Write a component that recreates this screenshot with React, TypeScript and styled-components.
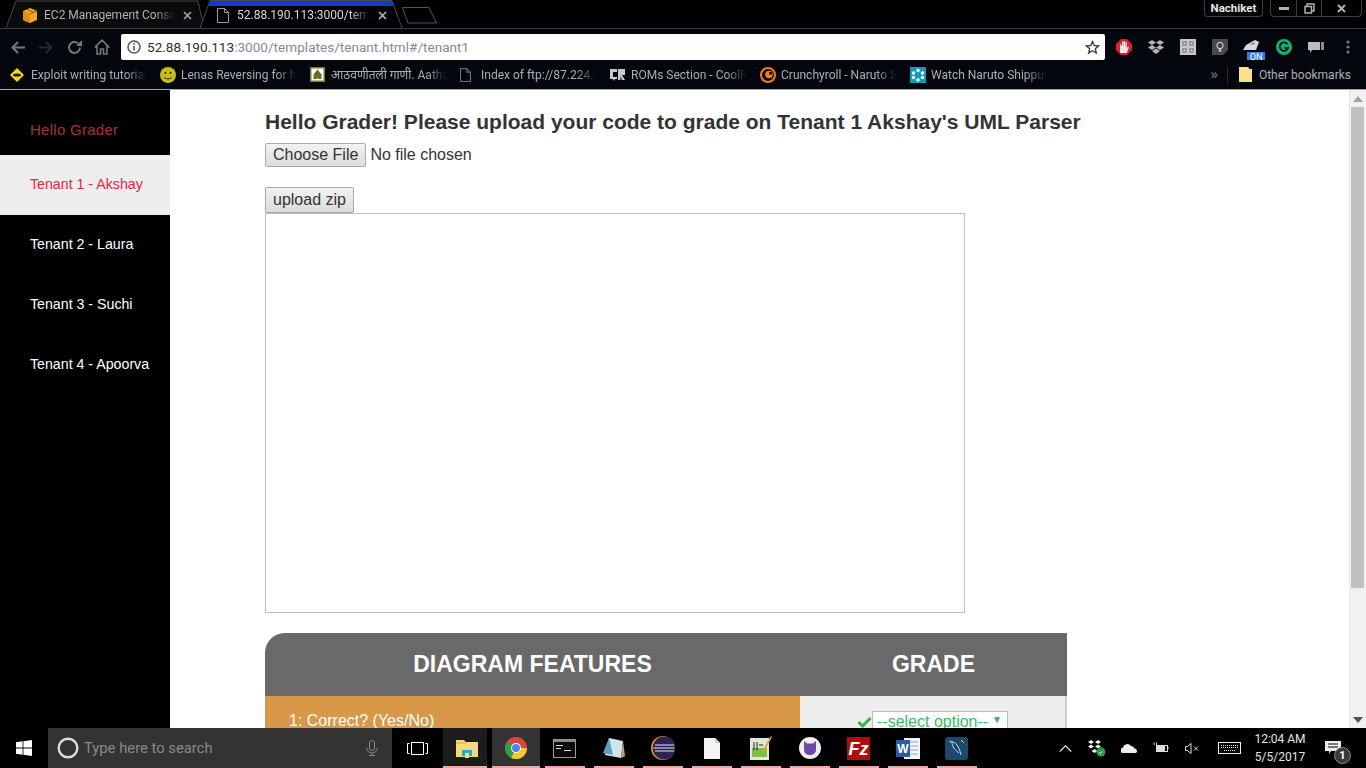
import React from 'react';
import styled, { createGlobalStyle } from 'styled-components';

const Global = createGlobalStyle`
  html, body { margin: 0; padding: 0; height: 100%; overflow: hidden; background: #000; }
  * { box-sizing: border-box; }
`;
const UI = `Roboto, "Noto Sans", "Noto Sans Devanagari", "DejaVu Sans", sans-serif`;
const WEB = `"Liberation Sans", Arial, sans-serif`;

const Screen = styled.div`
  width: 1366px; height: 768px; display: flex; flex-direction: column; overflow: hidden; position: relative; font-family: ${WEB};
`;
/* ---------- browser chrome ---------- */
const TabStrip = styled.div`
  height: 29px; background: #000; border-bottom: 1px solid #3c3c3c; display: flex; align-items: flex-start; padding-left: 6px; flex: none;
`;
const Tab = styled.div<{ $w: number; $pad: number }>`
  position: relative; width: ${p => p.$w}px; height: 28px; display: flex; align-items: center; padding: 2px 0 0 ${p => p.$pad}px;
  font: 12px ${UI}; flex: none;
  margin-right: -4px;
`;
const TabOutline = styled.svg`
  position: absolute; inset: 0; width: 100%; height: 100%;
`;
const TabTitle = styled.span<{ $w: number; $active?: boolean }>`
  position: relative; width: ${p => p.$w}px; margin-left: ${p => (p.$active ? 8 : 7)}px; white-space: nowrap; overflow: hidden;
  color: ${p => (p.$active ? '#d6d9dc' : '#aeb3b8')};
  -webkit-mask-image: linear-gradient(90deg, #000 85%, transparent);
  mask-image: linear-gradient(90deg, #000 85%, transparent);
`;
const TabClose = styled.svg`
  position: relative; margin-left: 8px; flex: none;
`;
const TabIcon = styled.svg`
  position: relative; flex: none;
`;
const NewTab = styled.svg`
  margin: 7px 0 0 4px; flex: none;
`;
const Spacer = styled.div`
  flex: 1;
`;
const EndGap = styled.div`
  flex: 0 0 15px;
`;
const CaptionGroup = styled.div<{ $w: number; $mr: number }>`
  width: ${p => p.$w}px; height: 17px; margin-right: ${p => p.$mr}px; border: 1px solid #3f3f3f; border-top: 0; border-radius: 0 0 4px 4px;
  display: flex; align-items: center; justify-content: center; font: bold 11.5px ${UI}; color: #e8e8e8; flex: none;
`;
const CaptionCell = styled.div<{ $w: number; $line?: boolean }>`
  width: ${p => p.$w}px; height: 100%; display: flex; align-items: center; justify-content: center;
  border-left: ${p => (p.$line ? '1px solid #3f3f3f' : '0')};
  flex: none;
`;
const Toolbar = styled.div`
  height: 31px; background: #04060d; display: flex; align-items: center; flex: none; padding-top: 5px;
`;
const NavBtn = styled.div`
  width: 28px; height: 26px; display: flex; align-items: center; justify-content: center; flex: none;
`;
const NavGroup = styled.div`
  display: flex; padding-left: 4px; width: 121px; flex: none;
`;
const Omnibox = styled.div`
  width: 984px; height: 26px; background: #fff; border-radius: 2px; display: flex; align-items: center; padding: 0 5px 0 6px; flex: none;
  font: 13.6px ${UI};
`;
const UrlHost = styled.span`
  color: #333;
`;
const UrlRest = styled.span`
  color: #8a8a8a;
`;
const Url = styled.div`
  margin-left: 6px; flex: 1; white-space: nowrap;
`;
const Extensions = styled.div`
  display: flex; padding-left: 3px;
`;
const ExtBtn = styled.div`
  width: 32px; height: 26px; display: flex; align-items: center; justify-content: center; flex: none;
`;
const Bookmarks = styled.div`
  height: 30px; background: #04060d; border-bottom: 1px solid #a5a5a5; display: flex; align-items: center; padding-left: 10px; flex: none;
  font: 12px ${UI}; color: #aab0b6;
`;
const Bookmark = styled.div`
  width: 150px; display: flex; align-items: center; flex: none;
`;
const BookmarkIcon = styled.div`
  width: 21px; display: flex; align-items: center; flex: none;
`;
const BookmarkText = styled.span`
  width: 116px; white-space: nowrap; overflow: hidden;
  -webkit-mask-image: linear-gradient(90deg, #000 82%, transparent);
  mask-image: linear-gradient(90deg, #000 82%, transparent);
`;
const Chevrons = styled.div`
  width: 14px; text-align: right; font-size: 15px; line-height: 15px; color: #6d6d6d; font-weight: bold;
`;
const Sep = styled.div`
  width: 1px; height: 16px; background: #2a2c30; margin: 0 11px 0 9px;
`;
const OtherText = styled.span`
  margin-left: 7px; white-space: nowrap;
`;
/* ---------- page ---------- */
const Main = styled.div`
  height: 638px; display: flex; background: #fff; overflow: hidden; flex: none;
`;
const Sidebar = styled.nav`
  width: 170px; background: #000; flex: none;
`;
const Greeting = styled.div`
  height: 65px; padding: 31px 0 0 30px; font-size: 15px; letter-spacing: .27px; line-height: 18px; color: #a83232;
`;
const NavItem = styled.div<{ $active?: boolean }>`
  height: 60px; display: flex; align-items: center; padding: 0 0 2px 30px; font-size: 14.2px;
  background: ${p => (p.$active ? '#eeeeee' : '#000')};
  color: ${p => (p.$active ? '#e8233f' : '#fff')};
`;
const Content = styled.main`
  flex: 1; padding: 20px 0 0 95px; color: #333;
`;
const Title = styled.h3`
  margin: 0 0 10px; font-size: 21px; line-height: 23px; font-weight: bold; color: #333; white-space: nowrap;
`;
const FileRow = styled.div`
  display: flex; align-items: center; height: 24px; font-size: 16px; margin-bottom: 20px;
`;
const FileNote = styled.span`
  margin-left: 4px; color: #333;
`;
const Btn = styled.button`
  font: 16px ${WEB}; color: #333; padding: 0 7px; height: 100%; border: 1px solid #a9a9a9; border-radius: 2px;
  background: linear-gradient(#f2f2f2, #dcdcdc); display: block;
`;
const UploadRow = styled.div`
  height: 26px; display: flex;
`;
const Preview = styled.div`
  width: 700px; height: 400px; border: 1px solid #bdbdbd; background: #fff;
`;
const Table = styled.div`
  width: 802px; margin-top: 20px;
`;
const THead = styled.div`
  height: 63px; background: #696969; border-top-left-radius: 20px; display: grid; grid-template-columns: 535px 267px; color: #fff;
`;
const Th = styled.div`
  display: flex; align-items: center; justify-content: center; padding-bottom: 1px; font-size: 23px; font-weight: bold;
`;
const TRow = styled.div`
  display: grid; grid-template-columns: 535px 267px; height: 60px;
`;
const FeatureCell = styled.div`
  background: #d99748; color: #fff; font-size: 16px; padding: 16px 0 0 24px; line-height: 18px;
`;
const GradeCell = styled.div`
  background: #eeeeee; border-right: 2px solid #d0d0d0; padding: 15px 0 0 57px; display: flex; align-items: flex-start; position: relative;
`;
const GreenCheck = styled.svg`
  margin-top: 5px; flex: none;
`;
const GreenSelect = styled.div`
  width: 136px; height: 24px; border: 1px solid #bbb; background: #fff; color: #34c060; font-size: 16px; padding: 0 5px 0 4px; line-height: 20px;
  display: flex; justify-content: space-between; white-space: nowrap;
`;
const Caret = styled.span`
  font-size: 10px; line-height: 16px; color: #2db84d;
`;
const Scrollbar = styled.div`
  width: 17px; background: #f1f1f1; border-left: 1px solid #e6e6e6; display: flex; flex-direction: column; align-items: center; padding-right: 1px; flex: none;
`;
const ScrollArrow = styled.div`
  height: 17px; flex: none; display: flex; align-items: center; justify-content: center;
`;
const ScrollThumb = styled.div`
  width: 13px; height: 481px; background: #c1c1c1; flex: none;
`;
/* ---------- taskbar ---------- */
const Taskbar = styled.footer`
  height: 40px; background: #000; display: flex; align-items: stretch; flex: none; color: #fff;
`;
const Start = styled.div`
  width: 48px; display: flex; align-items: center; justify-content: center; flex: none;
`;
const Search = styled.div`
  width: 344px; background: #333; display: flex; align-items: center; padding-left: 9px; font: 14.8px ${UI}; color: #8a8a8a; flex: none;
`;
const SearchText = styled.span`
  margin-left: 5px; flex: 1;
`;
const Mic = styled.svg`
  margin-right: 14px;
`;
const TaskView = styled.div`
  width: 50px; display: flex; align-items: center; justify-content: center; flex: none;
`;
const TaskApp = styled.div<{ $bg?: string; $l?: number; $r?: number }>`
  width: 49px; display: flex; align-items: center; justify-content: center; flex: none; position: relative;
  &::before {
    content: ''; position: absolute; top: 0; bottom: 0; left: ${p => p.$l ?? 5}px; right: ${p => p.$r ?? 4}px;
    background: ${p => p.$bg ?? 'transparent'};
  }
  &::after {
    content: ''; position: absolute; left: ${p => p.$l ?? 5}px; right: ${p => p.$r ?? 4}px; bottom: 0; height: 2px;
    background: #f2a79c;
  }
  svg { position: relative; }
`;
const Tray = styled.div`
  margin-left: auto; display: flex; align-items: center; padding-right: 10px;
`;
const TrayIcon = styled.div<{ $w: number }>`
  width: ${p => p.$w}px; height: 40px; display: flex; align-items: center; justify-content: center; flex: none;
`;
const Clock = styled.div`
  width: 60px; text-align: center; font: 12px/18px ${UI}; color: #e6e6e6; flex: none; white-space: nowrap;
`;
const Notify = styled.div`
  width: 46px; height: 40px; display: flex; align-items: center; justify-content: center; position: relative; flex: none;
`;
const NotifyBadge = styled.span`
  position: absolute; left: 24px; top: 19px; width: 17px; height: 17px; border-radius: 50%; background: #3a3a3a; border: 1px solid #888;
  font: bold 11px/15px ${UI}; text-align: center; color: #fff;
`;

/* ---------- drawings ---------- */
const CloseX = ({ c = '#a0a0a0' }: { c?: string }) => (
  <TabClose width="9" height="9" viewBox="0 0 9 9"><path d="M1 1l7 7M8 1L1 8" stroke={c} strokeWidth="1.7" /></TabClose>
);
const PageIcon = ({ c = '#9a9a9a', w = 12, h = 15 }: { c?: string; w?: number; h?: number }) => (
  <TabIcon width={w} height={h} viewBox="0 0 12 15" fill="none"><path d="M.5.5h7l4 4v10H.5zM7.5.5v4h4" stroke={c} /></TabIcon>
);
const AwsBox = () => (
  <TabIcon width="14" height="15" viewBox="0 0 14 15">
    <path d="M7 0l7 3v9l-7 3-7-3V3z" fill="#f5a623" /><path d="M7 6v9l-7-3V3z" fill="#e08e12" /><path d="M4 1.500l7 3M7 6l7-3" stroke="#7a4d06" strokeWidth=".8" fill="none" />
  </TabIcon>
);

const marks: { icon: React.ReactNode; text: string }[] = [
  { icon: <svg width="14" height="14" viewBox="0 0 14 14"><path d="M7 0l7 7-7 7-7-7z" fill="#f7d417" /><ellipse cx="7" cy="7" rx="4" ry="1.600" fill="#111" /></svg>, text: 'Exploit writing tutorial part' },
  { icon: <svg width="16" height="16" viewBox="0 0 16 16"><circle cx="8" cy="8" r="8" fill="#c9bd17" /><circle cx="5.500" cy="6" r="1" fill="#222" /><circle cx="10.500" cy="6" r="1" fill="#222" /><path d="M4 10c1.500 2.500 6.500 2.500 8 0" stroke="#222" fill="none" /></svg>, text: 'Lenas Reversing for Newbies' },
  { icon: <svg width="15" height="15" viewBox="0 0 15 15"><rect width="15" height="15" fill="#7d7a2a" /><rect x="1.500" y="1.500" width="12" height="12" fill="#fff" /><path d="M7.500 2.500l4 5v4.500h-3l-1-1-1 1h-3V7.500z" fill="#6a6a20" /></svg>, text: 'आठवणीतली गाणी. Aathavanitli' },
  { icon: <PageIcon c="#8a8a8a" w={11} h={14} />, text: 'Index of ftp://87.224.217.1' },
  { icon: <svg width="15" height="14" viewBox="0 0 15 14"><path d="M0 1h7v3H3v5h4v2H5l-1 2-1-2H0zM8 1h7v6h-3l3 5h-3l-1.500-4V12H8z" fill="#c6ccd2" /></svg>, text: 'ROMs Section - CoolROM.com' },
  { icon: <svg width="16" height="16" viewBox="0 0 16 16" fill="none"><circle cx="8" cy="8" r="7" stroke="#f47f1e" strokeWidth="2" /><circle cx="9" cy="7.500" r="3.800" fill="#f47f1e" /><circle cx="10.500" cy="6.200" r="1.500" fill="#04060d" /></svg>, text: 'Crunchyroll - Naruto Shippuden' },
  { icon: <svg width="16" height="16" viewBox="0 0 16 16" fill="#fff"><rect width="16" height="16" fill="#0f9bc0" /><circle cx="8" cy="3.500" r="1.700" /><circle cx="3.500" cy="6" r="1.700" /><circle cx="12.500" cy="6" r="1.700" /><circle cx="3.500" cy="10.500" r="1.700" /><circle cx="12.500" cy="10.500" r="1.700" /><circle cx="8" cy="13" r="1.700" /></svg>, text: 'Watch Naruto Shippuden' },
];

export default function App() {
  return (
    <Screen>
      <Global />
      <TabStrip>
        <Tab $w={198} $pad={17}>
          <TabOutline viewBox="0 0 198 28" preserveAspectRatio="none"><path d="M0 28L10 1H192L198 28" fill="#0b0b0c" stroke="#4a4a4a" /></TabOutline>
          <AwsBox />
          <TabTitle $w={131}>EC2 Management Console</TabTitle>
          <CloseX />
        </Tab>
        <Tab $w={202} $pad={17}>
          <TabOutline viewBox="0 0 202 28" preserveAspectRatio="none">
            <path d="M0 28L10 .5H192L202 28" fill="#000" stroke="#4a4a4a" />
            <path d="M10 1H192L194 6H8z" fill="#0a3cd2" />
          </TabOutline>
          <PageIcon />
          <TabTitle $w={133} $active>52.88.190.113:3000/templates</TabTitle>
          <CloseX c="#b5b5b5" />
        </Tab>
        <NewTab width="35" height="17" viewBox="0 0 35 17" fill="none"><path d="M.5.5H27L34.500 16H6z" stroke="#555" /></NewTab>
        <Spacer />
        <CaptionGroup $w={59} $mr={7}>Nachiket</CaptionGroup>
        <CaptionGroup $w={92} $mr={4}>
          <CaptionCell $w={25}><svg width="10" height="3"><rect width="10" height="3" fill="#b0b0b0" /></svg></CaptionCell>
          <CaptionCell $w={25} $line><svg width="11" height="11" viewBox="0 0 11 11" fill="none" stroke="#b0b0b0" strokeWidth="1.500"><path d="M3 3V1h7v7H8M1 3.500h6.500V10H1z" /></svg></CaptionCell>
          <CaptionCell $w={40} $line><svg width="9" height="9" viewBox="0 0 9 9"><path d="M1 1l7 7M8 1L1 8" stroke="#b0b0b0" strokeWidth="2" /></svg></CaptionCell>
        </CaptionGroup>
      </TabStrip>

      <Toolbar>
        <NavGroup>
          <NavBtn><svg width="14" height="13" viewBox="0 0 14 13" fill="none"><path d="M14 6.500H2M7 1L1.500 6.500 7 12" stroke="#77797d" strokeWidth="2" /></svg></NavBtn>
          <NavBtn><svg width="14" height="13" viewBox="0 0 14 13" fill="none"><path d="M0 6.500h12M7 1l5.500 5.500L7 12" stroke="#26282c" strokeWidth="2" /></svg></NavBtn>
          <NavBtn><svg width="15" height="15" viewBox="0 0 15 15" fill="none"><path d="M13 7.500A5.500 5.500 0 1 1 11 3.200" stroke="#77797d" strokeWidth="2" /><path d="M9 6h6V0z" fill="#77797d" /></svg></NavBtn>
          <NavBtn><svg width="16" height="16" viewBox="0 0 16 16" fill="none"><path d="M.7 8.500L8 1.200l7.300 7.300M3 6.500V15h3.500V10h3v5H13V6.500" stroke="#77797d" strokeWidth="1.600" /></svg></NavBtn>
        </NavGroup>
        <Omnibox>
          <svg width="14" height="14" viewBox="0 0 14 14" fill="none"><circle cx="7" cy="7" r="6" stroke="#555" strokeWidth="1.500" /><path d="M7 6v4.500M7 3.200v1.600" stroke="#555" strokeWidth="1.600" /></svg>
          <Url><UrlHost>52.88.190.113</UrlHost><UrlRest>:3000/templates/tenant.html#/tenant1</UrlRest></Url>
          <svg width="15" height="15" viewBox="0 0 15 15" fill="none"><path d="M7.500 1.500l1.800 4 4.300.4-3.300 2.800 1 4.300-3.800-2.300-3.800 2.300 1-4.300L1.400 5.900l4.300-.4z" stroke="#444" strokeWidth="1.400" /></svg>
        </Omnibox>
        <Extensions>
          <ExtBtn><svg width="16" height="16" viewBox="0 0 16 16"><path d="M5 0h6l5 5v6l-5 5H5l-5-5V5z" fill="#d8232a" /><path d="M4 14V5.500h1.500V7H6V2.500h1.300V7h.4V2h1.300v5h.4V3h1.300v6l1.300-1.500.9.700L10.800 14z" fill="#f3e6e6" /></svg></ExtBtn>
          <ExtBtn><svg width="16" height="15" viewBox="0 0 16 15" fill="#b5b5b5"><path d="M4 0l4 2.500L4 5 0 2.500zM12 0l4 2.500L12 5 8 2.500zM4 5l4 2.500L4 10 0 7.500zM12 5l4 2.500L12 10 8 7.500zM4 11l4-2.500 4 2.500-4 3z" /></svg></ExtBtn>
          <ExtBtn><svg width="16" height="16" viewBox="0 0 16 16"><rect width="16" height="16" fill="#c9c9c9" /><path d="M2 2h5v5H2zM9 2h5v5H9zM2 9h5v5H2zM9 9h5v5H9z" fill="#9a9a9a" /><path d="M4 4h1v1H4zM11 4h1v1h-1zM4 11h1v1H4zM11 11h1v1h-1z" fill="#eee" /></svg></ExtBtn>
          <ExtBtn><svg width="16" height="16" viewBox="0 0 16 16" fill="none"><path d="M0 0h16v11l-5 5H0z" fill="#4a4a4a" /><circle cx="8" cy="6.500" r="3.200" stroke="#e4e4e4" /><path d="M6.800 10.500h2.400v2H6.800z" fill="#e4e4e4" /></svg></ExtBtn>
          <ExtBtn>
            <svg width="28" height="28" viewBox="0 0 28 28"><path d="M8 12l9-5 4 2-3 8H5z" fill="#d8d8d8" /><path d="M12 12l4-3 1 2z" fill="#777" /><rect x="9" y="19" width="18" height="9" fill="#3b7de0" /><text x="18" y="27" textAnchor="middle" fontSize="9" fontFamily="Roboto" fill="#fff">ON</text></svg>
          </ExtBtn>
          <ExtBtn><svg width="16" height="16" viewBox="0 0 16 16" fill="none"><circle cx="8" cy="8" r="8" fill="#15b06f" /><path d="M11.500 5.200A4.200 4.200 0 1 0 12 9H8.500" stroke="#0b0d12" strokeWidth="1.800" /></svg></ExtBtn>
          <ExtBtn><svg width="16" height="14" viewBox="0 0 16 14"><path d="M0 2h12v8H4l-2 3v-3H0z" fill="#bdbdbd" /><path d="M13 2h3v8h-3z" fill="#8a8a8a" /></svg></ExtBtn>
          <ExtBtn><svg width="4" height="14" viewBox="0 0 4 14" fill="#777"><circle cx="2" cy="2" r="1.600" /><circle cx="2" cy="7" r="1.600" /><circle cx="2" cy="12" r="1.600" /></svg></ExtBtn>
        </Extensions>
      </Toolbar>

      <Bookmarks>
        {marks.map(m => (
          <Bookmark key={m.text}><BookmarkIcon>{m.icon}</BookmarkIcon><BookmarkText>{m.text}</BookmarkText></Bookmark>
        ))}
        <Spacer />
        <Chevrons>»</Chevrons>
        <Sep />
        <svg width="13" height="15" viewBox="0 0 13 15"><path d="M0 0h9l1 1v1h3v13H0z" fill="#fbe08a" /></svg>
        <OtherText>Other bookmarks</OtherText>
        <EndGap />
      </Bookmarks>

      <Main>
        <Sidebar>
          <Greeting>Hello Grader</Greeting>
          <NavItem $active>Tenant 1 - Akshay</NavItem>
          <NavItem>Tenant 2 - Laura</NavItem>
          <NavItem>Tenant 3 - Suchi</NavItem>
          <NavItem>Tenant 4 - Apoorva</NavItem>
        </Sidebar>
        <Content>
          <Title>Hello Grader! Please upload your code to grade on Tenant 1 Akshay's UML Parser</Title>
          <FileRow><Btn>Choose File</Btn><FileNote>No file chosen</FileNote></FileRow>
          <UploadRow><Btn>upload zip</Btn></UploadRow>
          <Preview />
          <Table>
            <THead><Th>DIAGRAM FEATURES</Th><Th>GRADE</Th></THead>
            <TRow>
              <FeatureCell>1: Correct? (Yes/No)</FeatureCell>
              <GradeCell>
                <GreenCheck width="15" height="12" viewBox="0 0 15 12"><path d="M1.500 6l4 4 8-8" stroke="#2db84d" strokeWidth="3" fill="none" /></GreenCheck>
                <GreenSelect>--select option--<Caret>▼</Caret></GreenSelect>
              </GradeCell>
            </TRow>
          </Table>
        </Content>
        <Scrollbar>
          <ScrollArrow><svg width="10" height="6"><path d="M0 6L5 0l5 6z" fill="#a3a3a3" /></svg></ScrollArrow>
          <ScrollThumb />
          <Spacer />
          <ScrollArrow><svg width="10" height="6"><path d="M0 0l5 6 5-6z" fill="#505050" /></svg></ScrollArrow>
        </Scrollbar>
      </Main>

      <Taskbar>
        <Start><svg width="16" height="16" viewBox="0 0 16 16" fill="#fff"><path d="M0 2.200l6.600-.9v6.300H0zM7.400 1.200L16 0v7.600H7.400zM0 8.400h6.600v6.300L0 13.800zM7.400 8.400H16V16l-8.600-1.200z" /></svg></Start>
        <Search>
          <svg width="22" height="22" viewBox="0 0 22 22" fill="none"><circle cx="11" cy="11" r="9.300" stroke="#dcdcdc" strokeWidth="2.400" /></svg>
          <SearchText>Type here to search</SearchText>
          <Mic width="12" height="16" viewBox="0 0 12 16" fill="none" stroke="#888"><rect x="3.500" y=".5" width="5" height="10" rx="2.500" /><path d="M.5 7.500a5.500 5.500 0 0 0 11 0M6 13v2.500M3 15.500h6" /></Mic>
        </Search>
        <TaskView><svg width="21" height="13" viewBox="0 0 21 13" fill="none" stroke="#fff"><rect x="4.500" y=".5" width="12" height="12" /><path d="M2.500 1.500H.5v10h2M18.500 1.500h2v10h-2" /></svg></TaskView>
        <TaskApp $bg="#1c1c1c" $l={1} $r={4}>
          <svg width="22" height="19" viewBox="0 0 22 19"><path d="M0 1h8l2 2h12v15H0z" fill="#f6d97c" /><path d="M0 3h10v2H0z" fill="#e9c050" /><path d="M6 11h10v6H6z" fill="#2aa5dc" /><path d="M9 14h4v5H9z" fill="#f6d97c" /></svg>
        </TaskApp>
        <TaskApp $bg="#333" $l={1} $r={0}>
          <svg width="22" height="22" viewBox="0 0 22 22"><circle cx="11" cy="11" r="11" fill="#e0433a" /><path d="M11 11L22 11A11 11 0 0 1 6 20.800z" fill="#f8c924" /><path d="M11 11L6 20.800A11 11 0 0 1 2 4.800z" fill="#2f9f48" /><circle cx="11" cy="11" r="5" fill="#fff" /><circle cx="11" cy="11" r="4" fill="#4a84e8" /></svg>
        </TaskApp>
        <TaskApp><svg width="23" height="19" viewBox="0 0 23 19"><rect x=".5" y=".5" width="22" height="18" fill="#0a0a0a" stroke="#999" /><rect x="1" y="1" width="21" height="2" fill="#888" /><path d="M3 6h7v1H3zM3 9h5v1H3zM11 11h7v1h-7z" fill="#ddd" /></svg></TaskApp>
        <TaskApp><svg width="22" height="22" viewBox="0 0 22 22"><path d="M6 1l14 3-2 17-16-3z" fill="#cfe3ea" /><path d="M0 16L6 1l4 17z" fill="#5aa0bd" /><path d="M20 4l2 15-4 2z" fill="#c6a55c" /></svg></TaskApp>
        <TaskApp><svg width="24" height="24" viewBox="0 0 24 24"><circle cx="12" cy="12" r="12" fill="#f39a1e" /><circle cx="13" cy="12" r="11.400" fill="#2c2255" /><path d="M4 9h19M2.500 12h21M4 15h19" stroke="#e6e6f0" strokeWidth="1.200" /></svg></TaskApp>
        <TaskApp><svg width="16" height="21" viewBox="0 0 16 21"><path d="M0 0h11l5 5v16H0z" fill="#f4f4f4" /><path d="M11 0v5h5z" fill="#cfcfcf" /></svg></TaskApp>
        <TaskApp><svg width="22" height="24" viewBox="0 0 22 24"><rect y="2" width="19" height="22" fill="#dfe9d5" /><rect x="2" y="12" width="15" height="9" fill="#7cc04a" /><path d="M4 6v8M7 6v8M9 9h4" stroke="#222" /><path d="M21 0l1 1-7 13-2 1 0-2z" fill="#e0a23c" /></svg></TaskApp>
        <TaskApp><svg width="22" height="22" viewBox="0 0 22 22"><circle cx="11" cy="11" r="11" fill="#eee" /><path d="M5 4l3 2.500h6L17 4v9c0 3-3 5-6 5s-6-2-6-5z" fill="#6e4aa5" /></svg></TaskApp>
        <TaskApp><svg width="23" height="23" viewBox="0 0 23 23"><rect width="23" height="23" fill="#b40b0b" /><text x="11.500" y="18" textAnchor="middle" fontSize="18" fontWeight="bold" fontStyle="italic" fontFamily="Liberation Sans" fill="#fff">Fz</text></svg></TaskApp>
        <TaskApp><svg width="24" height="23" viewBox="0 0 24 23"><rect x="8" y="1" width="16" height="21" fill="#f0f4fa" /><path d="M10 5h12M10 9h12M10 13h12M10 17h12" stroke="#8fa8d0" /><rect y="3" width="14" height="17" fill="#2a5ea8" /><text x="7" y="16" textAnchor="middle" fontSize="12" fontWeight="bold" fontFamily="Liberation Sans" fill="#fff">W</text></svg></TaskApp>
        <TaskApp><svg width="23" height="23" viewBox="0 0 23 23" fill="none"><rect width="23" height="23" rx="3" fill="#1d4a6c" /><path d="M4 5c5-2 10 3 12 13M7 5c0 5 3 8 7 11M16 3l3 3" stroke="#cfdde8" /></svg></TaskApp>
        <Tray>
          <TrayIcon $w={34}><svg width="13" height="7" viewBox="0 0 13 7" fill="none"><path d="M.7 6.500L6.500.8l5.800 5.700" stroke="#ddd" strokeWidth="1.200" /></svg></TrayIcon>
          <TrayIcon $w={30}><svg width="18" height="17" viewBox="0 0 18 17"><path d="M3 0l3 2-3 2-3-2zM10 0l3 2-3 2-3-2zM3 4.500l3 2-3 2-3-2zM10 4.500l3 2-3 2-3-2zM6.500 9l3 2-3 2-3-2z" fill="#eee" /><circle cx="13" cy="12" r="4.500" fill="#27a04a" /><path d="M11 12l1.500 1.500L15 11" stroke="#fff" fill="none" /></svg></TrayIcon>
          <TrayIcon $w={34}><svg width="16" height="10" viewBox="0 0 16 10"><path d="M1 10a3 3 0 0 1 1-5.500A4.500 4.500 0 0 1 10 3a3.500 3.500 0 0 1 3.500 2.500A2.500 2.500 0 0 1 15 10z" fill="#eee" /></svg></TrayIcon>
          <TrayIcon $w={30}><svg width="16" height="12" viewBox="0 0 16 12" fill="none" stroke="#ddd"><rect x="3.500" y="3.500" width="11" height="6" /><path d="M4.500 4.500h7v4h-7z" fill="#ddd" /><path d="M1 .5v2.500M3.500.5v2.500" /><path d="M15 5v2" /></svg></TrayIcon>
          <TrayIcon $w={32}><svg width="14" height="11" viewBox="0 0 14 11" fill="none" stroke="#ddd"><path d="M.5 3.500h2L6 .5v10L2.500 7.500h-2zM9 3.500l4 4M13 3.500l-4 4" /></svg></TrayIcon>
          <TrayIcon $w={42}><svg width="23" height="12" viewBox="0 0 23 12" fill="none" stroke="#eee"><rect x=".5" y=".5" width="22" height="11" /><path d="M3 3.500h17M3 5.500h17M6 8.500h11" strokeDasharray="1 1" /></svg></TrayIcon>
          <Clock>12:04 AM<br />5/5/2017</Clock>
          <Notify>
            <svg width="16" height="14" viewBox="0 0 16 14"><path d="M0 0h16v10H6l-2 3v-3H0z" fill="#eee" /><path d="M3 3h10M3 6h10" stroke="#000" /></svg>
            <NotifyBadge>1</NotifyBadge>
          </Notify>
        </Tray>
      </Taskbar>
    </Screen>
  );
}
